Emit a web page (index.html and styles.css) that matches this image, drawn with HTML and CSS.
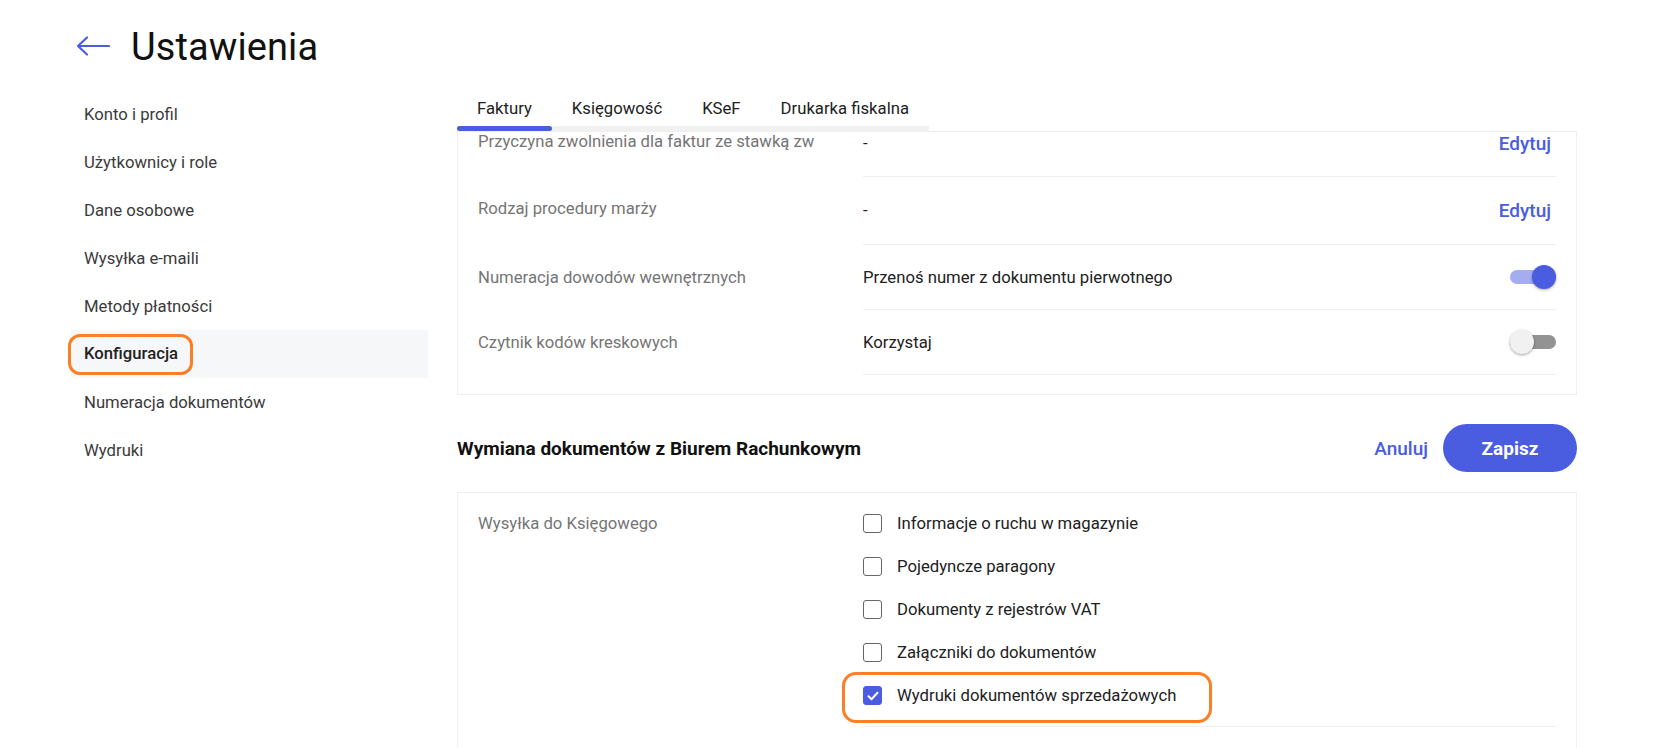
FILE: index.html
```html
<!DOCTYPE html>
<html lang="pl">
<head>
<meta charset="utf-8">
<title>Ustawienia</title>
<link rel="stylesheet" href="styles.css">
</head>
<body>
<header class="page-header">
  <svg class="back-arrow" width="34" height="20" viewBox="0 0 34 20" fill="none" stroke="#4a5ce0" stroke-width="2.2" stroke-linecap="round" stroke-linejoin="round">
    <path d="M33 10H2M11 1.5L2 10l9 8.5"/>
  </svg>
  <h1 class="page-title">Ustawienia</h1>
</header>
<div class="layout">
  <nav class="sidebar">
    <div class="nav-item">Konto i profil</div>
    <div class="nav-item">Użytkownicy i role</div>
    <div class="nav-item">Dane osobowe</div>
    <div class="nav-item">Wysyłka e-maili</div>
    <div class="nav-item">Metody płatności</div>
    <div class="nav-item active"><span class="highlight-text">Konfiguracja</span></div>
    <div class="nav-item">Numeracja dokumentów</div>
    <div class="nav-item">Wydruki</div>
  </nav>
  <main class="main">
    <div class="tabs">
      <div class="tab active">Faktury</div>
      <div class="tab">Księgowość</div>
      <div class="tab">KSeF</div>
      <div class="tab">Drukarka fiskalna</div>
    </div>
    <section class="card card-scroll">
      <div class="rows">
        <div class="row row-first">
          <div class="row-label label-first">Przyczyna zwolnienia dla faktur ze stawką zw</div>
          <div class="row-body"><span class="row-value">-</span><a class="edit-link">Edytuj</a></div>
        </div>
        <div class="row row-tall">
          <div class="row-label label-up">Rodzaj procedury marży</div>
          <div class="row-body"><span class="row-value">-</span><a class="edit-link">Edytuj</a></div>
        </div>
        <div class="row">
          <div class="row-label">Numeracja dowodów wewnętrznych</div>
          <div class="row-body"><span class="row-value">Przenoś numer z dokumentu pierwotnego</span>
            <span class="toggle on"><span class="toggle-track"></span><span class="toggle-thumb"></span></span></div>
        </div>
        <div class="row">
          <div class="row-label">Czytnik kodów kreskowych</div>
          <div class="row-body"><span class="row-value">Korzystaj</span>
            <span class="toggle"><span class="toggle-track"></span><span class="toggle-thumb"></span></span></div>
        </div>
      </div>
    </section>
    <div class="section-header">
      <h2 class="section-title">Wymiana dokumentów z Biurem Rachunkowym</h2>
      <div class="actions">
        <a class="cancel-link">Anuluj</a>
        <button class="save-btn">Zapisz</button>
      </div>
    </div>
    <section class="card card-checks">
      <div class="row-label checks-label">Wysyłka do Księgowego</div>
      <div class="checks">
        <label class="check-item"><span class="checkbox"></span>Informacje o ruchu w magazynie</label>
        <label class="check-item"><span class="checkbox"></span>Pojedyncze paragony</label>
        <label class="check-item"><span class="checkbox"></span>Dokumenty z rejestrów VAT</label>
        <label class="check-item"><span class="checkbox"></span>Załączniki do dokumentów</label>
        <label class="check-item highlighted"><span class="checkbox checked"><svg width="12" height="10" viewBox="0 0 12 10" fill="none" stroke="#fff" stroke-width="2" stroke-linecap="round" stroke-linejoin="round"><path d="M1.5 5.2l3 3L10.5 1.8"/></svg></span>Wydruki dokumentów sprzedażowych</label>
      </div>
    </section>
  </main>
</div>
</body>
</html>
```

FILE: styles.css
```css
* { box-sizing: border-box; }
html, body { margin: 0; padding: 0; background: #fff; }
body {
  font-family: Roboto, "Liberation Sans", Arial, sans-serif;
  color: #212121;
  font-size: 16.7px;
  overflow: hidden;
  height: 748px;
}

.page-header {
  height: 90px;
  display: flex;
  align-items: center;
  padding-left: 76px;
  gap: 21px;
}
.back-arrow { display: block; margin-top: 2px; }
.page-title {
  margin: 0;
  padding-top: 4px;
  font-size: 38px;
  font-weight: 400;
  color: #111;
  line-height: 44px;
  letter-spacing: 0.1px;
}

.layout {
  display: flex;
  align-items: flex-start;
  padding-left: 71px;
  gap: 29px;
}

.sidebar {
  width: 357px;
  display: flex;
  flex-direction: column;
}
.nav-item {
  height: 48px;
  display: flex;
  align-items: center;
  padding-left: 13px;
  font-size: 16.7px;
  color: #3a3a3a;
}
.nav-item.active {
  background: #f6f7f9;
  font-weight: 500;
  color: #222;
}
.highlight-text {
  position: relative;
  line-height: 20px;
}
.highlight-text::after {
  content: "";
  position: absolute;
  left: -16px;
  right: -15px;
  top: -10px;
  bottom: -11px;
  border: 3.5px solid #fa7f26;
  border-radius: 12px;
}

.main {
  width: 1120px;
}

.tabs {
  display: inline-flex;
  border-bottom: 5px solid #f1f1f1;
  height: 41px;
  vertical-align: top;
}
.tab {
  position: relative;
  padding: 9px 20px 0;
  line-height: 20px;
  font-size: 16.7px;
  color: #212121;
}
.tab.active::after {
  content: "";
  position: absolute;
  left: 0;
  right: 0;
  bottom: -5px;
  height: 5px;
  border-radius: 3px;
  background: #4a5ce0;
}

.card {
  border: 1px solid #efefef;
  background: #fff;
}
.card-scroll {
  height: 264px;
  overflow: hidden;
  padding: 0 20px;
}
.rows {
  margin-top: -21px;
}
.row {
  display: grid;
  grid-template-columns: 385px 1fr;
}
.row-label {
  display: flex;
  align-items: center;
  font-size: 16.7px;
  color: #757575;
}
.label-first {
  padding-bottom: 6px;
}
.label-up {
  padding-bottom: 5px;
}
.row-body {
  height: 65px;
  border-bottom: 1px solid #efefef;
  display: flex;
  align-items: center;
  justify-content: space-between;
}
.row-tall .row-body {
  height: 68px;
}
.row-first .row-body {
  height: 66px;
}
.row-value {
  font-size: 16.7px;
  color: #212121;
}
.edit-link {
  font-size: 19px;
  font-weight: 500;
  color: #4a5ce0;
  padding-right: 5px;
}

.toggle {
  position: relative;
  width: 46px;
  height: 24px;
  display: inline-block;
}
.toggle-track {
  position: absolute;
  left: 0;
  right: 0;
  top: 5px;
  height: 14px;
  border-radius: 7px;
  background: #939393;
}
.toggle-thumb {
  position: absolute;
  top: 0;
  left: 0;
  width: 24px;
  height: 24px;
  border-radius: 50%;
  background: #f1f1f1;
  box-shadow: 0 1px 3px rgba(0,0,0,0.35);
}
.toggle.on .toggle-track { background: #a3adf0; }
.toggle.on .toggle-thumb { left: 22px; background: #4a5ce0; }

.section-header {
  display: flex;
  align-items: center;
  justify-content: space-between;
  margin-top: 29px;
  margin-bottom: 20px;
}
.section-title {
  margin: 0;
  font-size: 19px;
  font-weight: 700;
  color: #111;
}
.actions {
  display: flex;
  align-items: center;
  gap: 15px;
}
.cancel-link {
  font-size: 19px;
  font-weight: 500;
  color: #4a5ce0;
}
.save-btn {
  height: 48px;
  width: 134px;
  border: none;
  border-radius: 24px;
  background: #4a5ce0;
  color: #fff;
  font-family: inherit;
  font-size: 19px;
  font-weight: 700;
}

.card-checks {
  display: grid;
  grid-template-columns: 385px 1fr;
  padding: 9px 20px 0 20px;
  height: 270px;
}
.checks-label {
  align-items: flex-start;
  height: 43px;
  line-height: 43px;
}
.checks {
  display: flex;
  flex-direction: column;
  padding-bottom: 9px;
  border-bottom: 1px solid #efefef;
  align-self: start;
}
.check-item {
  height: 43px;
  display: flex;
  align-items: center;
  gap: 15px;
  font-size: 16.7px;
  color: #212121;
  position: relative;
}
.checkbox {
  width: 19px;
  height: 19px;
  border: 1.5px solid #666;
  border-radius: 3px;
  display: flex;
  align-items: center;
  justify-content: center;
  background: #fff;
}
.checkbox.checked {
  background: #4a5ce0;
  border-color: #4a5ce0;
}
.check-item.highlighted::after {
  content: "";
  position: absolute;
  left: -21px;
  top: -2px;
  width: 364px;
  height: 45px;
  border: 3.5px solid #fa7f26;
  border-radius: 14px;
}
```
